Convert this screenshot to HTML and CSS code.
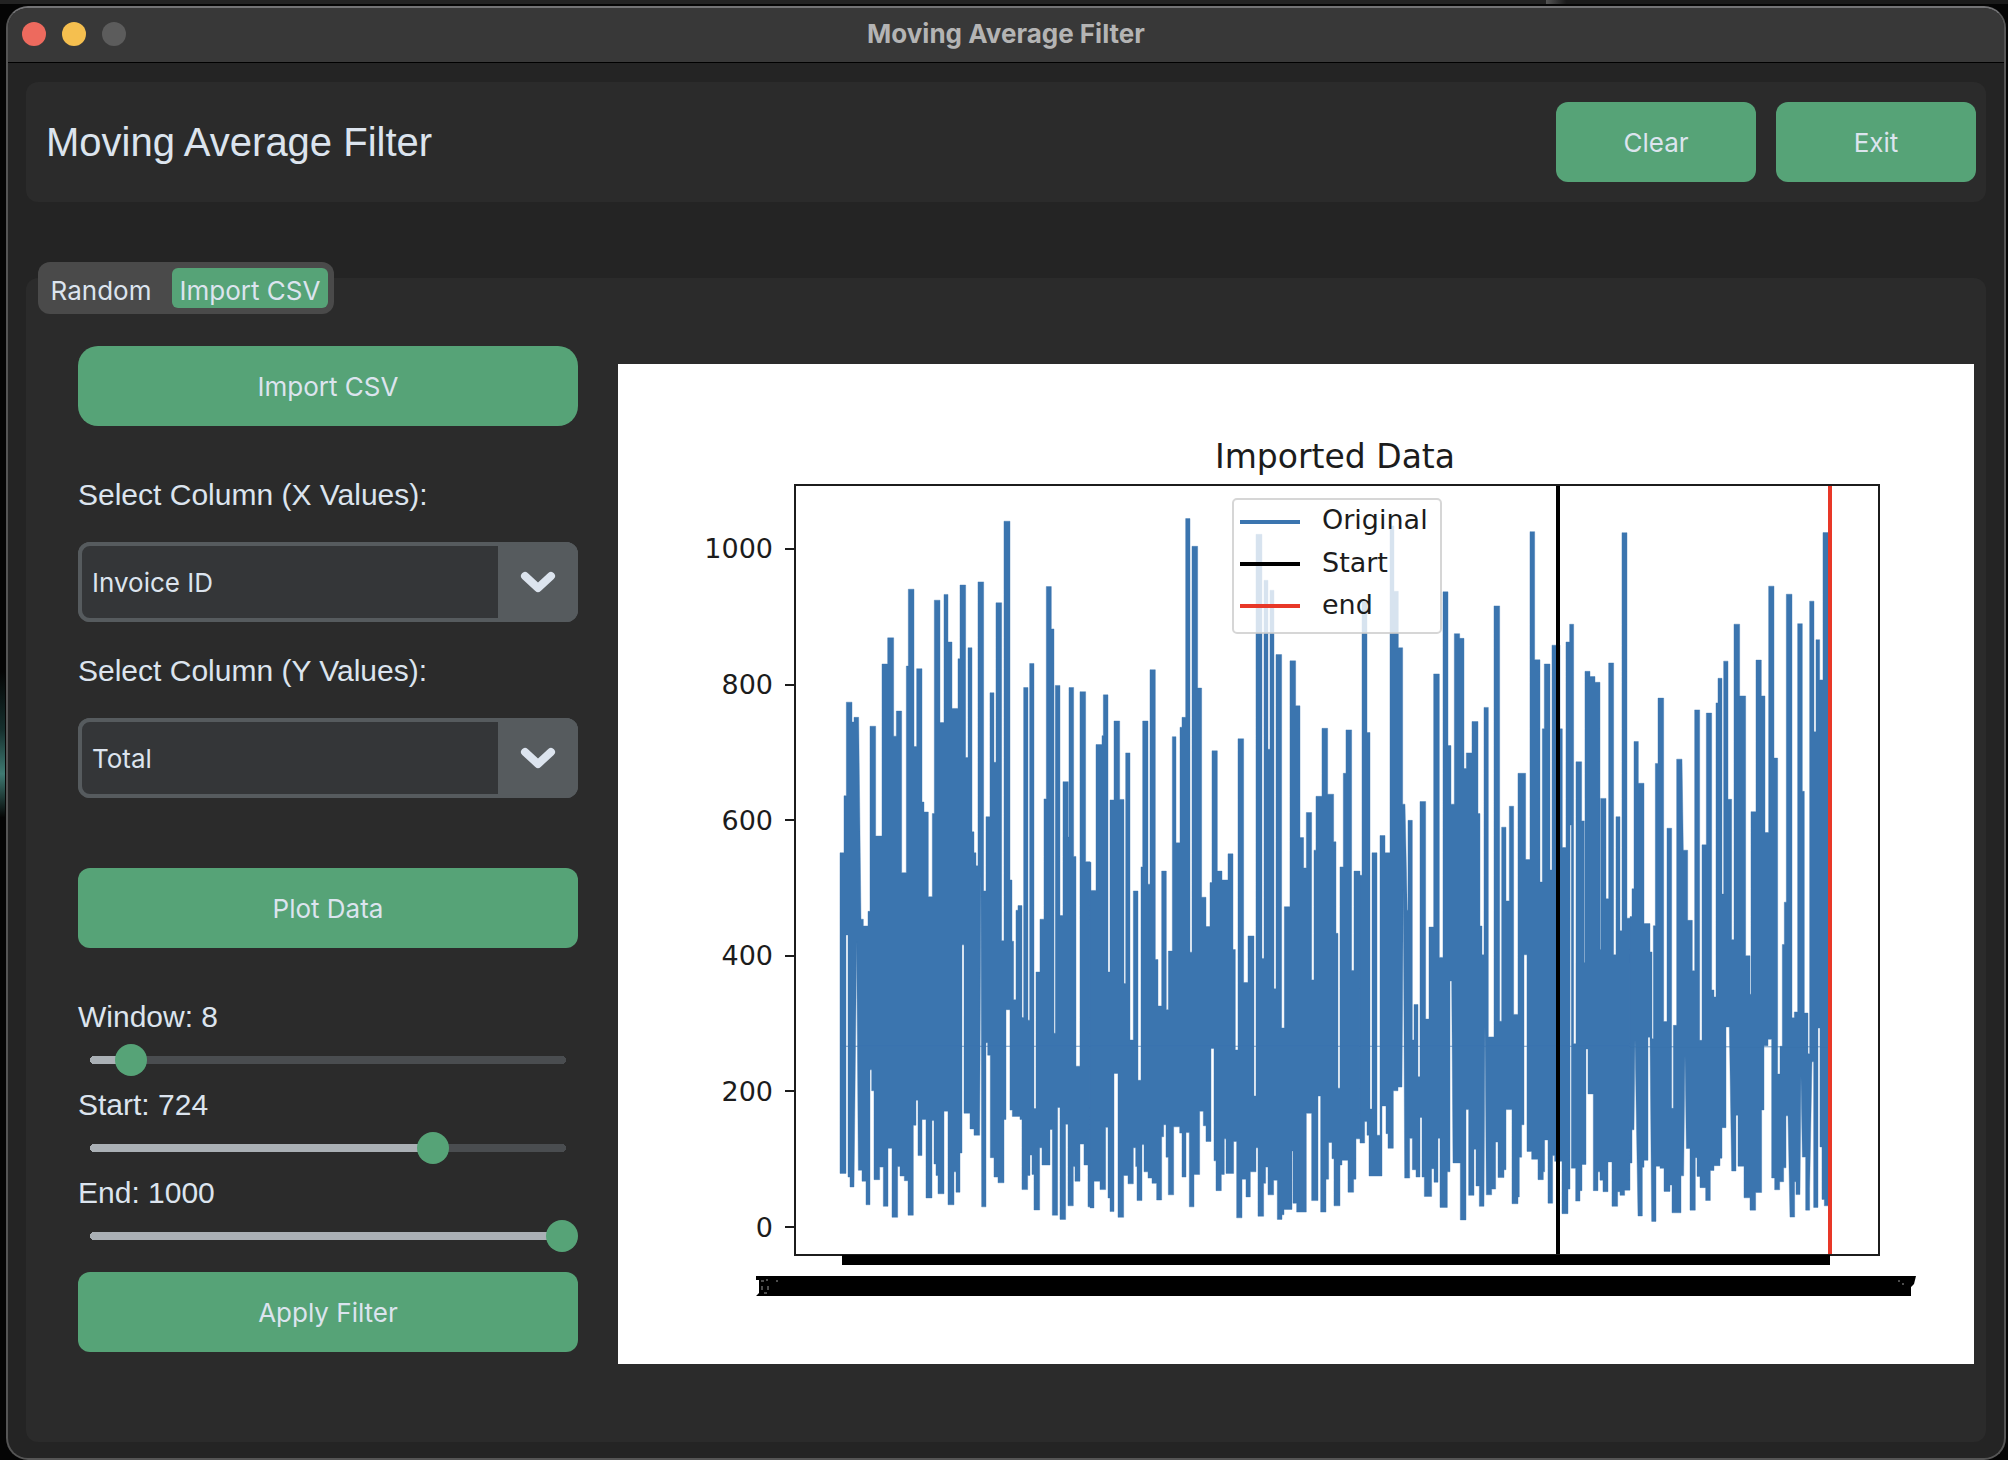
FILE: index.html
```
<!DOCTYPE html>
<html lang="en">
<head>
<meta charset="utf-8">
<meta name="viewport" content="width=device-width, initial-scale=1">
<title>Moving Average Filter</title>
<link rel="stylesheet" href="styles.css">
</head>
<body>
<div class="window">
  <header class="titlebar">
    <div class="lights">
      <button class="light light-close" type="button" aria-label="Close"></button>
      <button class="light light-minimize" type="button" aria-label="Minimize"></button>
      <button class="light light-zoom" type="button" aria-label="Zoom" disabled></button>
    </div>
    <span class="titlebar-text">Moving Average Filter</span>
  </header>

  <div class="content">
    <section class="panel toolbar">
      <h1 class="heading">Moving Average Filter</h1>
      <button class="button button-small" type="button">Clear</button>
      <button class="button button-small" type="button">Exit</button>
    </section>

    <main class="panel workspace">
      <nav class="tabs">
        <button class="tab tab-random" type="button">Random</button>
        <button class="tab tab-import tab-active" type="button">Import CSV</button>
      </nav>

      <div class="columns">
        <form class="controls">
          <button class="button button-import" type="button">Import CSV</button>

          <label class="label field-label" for="x-column">Select Column (X Values):</label>
          <div class="combo">
            <select class="combo-select" id="x-column"><option>Invoice ID</option></select>
            <span class="combo-arrow"><svg width="36" height="24" viewBox="0 0 36 24"><path d="M5 6L18 18L31 6"/></svg></span>
          </div>

          <label class="label field-label" for="y-column">Select Column (Y Values):</label>
          <div class="combo">
            <select class="combo-select" id="y-column"><option>Total</option></select>
            <span class="combo-arrow"><svg width="36" height="24" viewBox="0 0 36 24"><path d="M5 6L18 18L31 6"/></svg></span>
          </div>

          <button class="button button-plot" type="button">Plot Data</button>

          <div class="sliders">
            <div class="slider-row">
              <label class="label" for="window-size">Window: 8</label>
              <input class="slider" id="window-size" type="range" min="0" max="100" value="8" style="--fill:8%">
            </div>
            <div class="slider-row">
              <label class="label" for="start">Start: 724</label>
              <input class="slider" id="start" type="range" min="0" max="1000" value="724" style="--fill:72%">
            </div>
            <div class="slider-row">
              <label class="label" for="end">End: 1000</label>
              <input class="slider" id="end" type="range" min="0" max="1000" value="1000" style="--fill:100%">
            </div>
          </div>

          <button class="button" type="button">Apply Filter</button>
        </form>

        <svg class="chart" viewBox="0 0 1356 1000" role="img" aria-label="Imported Data">
          <rect width="1356" height="1000" fill="#fff"/>
          <!-- Invoice totals: each path holds the upper and the lower outline of a stretch of the series -->
          <g class="series">
            <path transform="translate(202 107) scale(.3333 .523)" d="M60 1100V730H72V621H79V442H96V480H102V471H116L123 857H130V870H144V842H150V488H167V698H186V369H203V319H221V507H229V459H245V768H259V373H265V226H282V527H290V378H306V633H312V652H325V814H337V655H343V247H360V481H372V236H384V327H396V454H414V359H420V218H437V548H444V338H456V690H462V730H468V755H474V212H491V803H498V661H510V424H522V557H528V252H545V898H552V96H570V782H576V899H581V1011H588V840H594V831H606V1045H611V414H624V1050H629V368H642V1219H648V958H660V857H672V627H679V221H694V302H702V1075H706V410H720V850H729V594H745V700H747V414H761V737H768V1138H780V422H797V747H810V1100Z
              M60 1100V1343H78V887H84V1350H90V1369H102L110 900L115 1337H126V1358H138V1403H150V1145H155V1185H162V1355H179V1331H190V1406H204V1295H216V1427H233V1330H240V1348H253V1357H264V1423H280V1251H288V1203H294V1309H306V1240H318V1390H336V1242H342V1325H348V1347H354V1382H372V1224H384V1403H402V1340H408V1379H420V1304H426V906H432V1228H450V1258H462V1270H479L483 770L485 1407H498V1093H503V1117H511V1313H522V1350H534V1361H552V1240H558V1030H570V1222H577V1234H600V1240H606V1374H623V1347H630V1308H636V1345H642V1413H659V1294H666V1327H690V1259H697V1423H713V1217H720V1431H737V1249H744V1405H760V1330H765V1358H780V1287H792V1327H804V1407H810V1100Z"/>
            <path transform="translate(472 107) scale(.3333 .523)" d="M0 1100V748H3V802H18V523H36V506H40V428H54V958H60V629H72V478H89V628H102V980H107V539H120V1088H130V803H144V1165H153V757H158V478H174V790H180V380H196V934H204V1023H215V765H229V1030H235V918H247V508H258V711H270V490H276V471H287V91H300V920H306V144H323V415H335V815H348V871H360V787H366V535H382V765H396V782H414V732H429V915H436V1107H444V512H461V978H474V889H492V1195H498V121H516V932H522V209H534V532H540V228H552V990H558V351H575V1065H583V833H600V363H617V449H630V701H641V759H649V653H665V973H672V725H678V622H696V492H713V618H731V709H738V884H744V1180H750V757H760V578H768V495H785V955H792V765H810V1100Z
              M0 1100V1409H12V1358H30V1374H47V1255H54V1390H60V1416H72V1152H84V1427H101V1347H114V1363H130V1294H137V1330H141V1395H156V1288H162V1340H174V1352H186V1362H200V1394H215V1273H221V1250H228V1312H235V1384H251V1254H269V1266H276V1350H288V1265H298V1407H312V1345H329V1224H340V1252H348V1282H363V1104H372V1319H378V1376H394V1345H403V1277H408V1343H431V1282H440V1428H456V1354H468V1388H481V1340H498V1294H504V1425H521V1362H527V1331H534V1384H551V1356H562V1431H576V1422H582V1412H606V1300H609V1400H620V1417H649V1228H665V1395H684V1195H692V1417H708V1354H716V1284H726V1315H732V1405H750V1327H756V1318H774V1379H791V1354H798V1277H810V1100Z"/>
            <path transform="translate(742 107) scale(.3333 .523)" d="M0 1100V773H6V250H21V500H30V1220H36V730H51V1270H60V697H75V730H90V105H102V230H115V338H128V637H135L142 840H144V668H157V1088H162V1020H174V1158H180V632H197V1048H207V872H221V388H238V930H249V231H264V525H273V637H283V311H299V320H312V569H319V539H336V479H354V655H360V870H366V925H372V452H385V1082H402V258H419V1052H425V681H438V822H448V641H461V1039H474V578H497V743H510V116H524V361H540V786H547V493H553V369H570V763H576V333H600V493H607V720H618V327H629V293H641V1095H648V556H665V669H673V940H675V383H690V393H705V404H720V915H722V626H738V818H746V367H761V925H768V661H780V879H786V118H801V855H810V1100Z
              M0 1100V1285H14V1244H21V1270H27V1348H66V1214H78V1267H84V1295H100V1185H114V1178H126L130 800L134 1352H149V1276H157V1336H168V1350H180V1236H186V1350H193V1387H215V1334H222V1360H234V1276H240V1408H262V1340H270V975H275L279 1323H301V1432H318V1221H326V1385H342V1297H348V1367H358V1406H372L375 1060L379 1384H395V1373H407V1283H414V1351H432V1336H438V1221H456V1401H474V1388H478V1312H485V1250H492V925H501V1301H515V1316H534V1355H550V1340H554V1279H564V1400H578V1309H584V1320H606V1420H624V1373H630V677H634V1333H647V1396H660V1376H666V1326H678V1105H684V1191H700V1376H714V1340H720V1356H729V1378H744V1321H756V1406H773V1378H780V1385H794V1375H810V1100Z"/>
            <path transform="translate(1012 107) scale(.3333 .5356)" d="M0 1075V832H6V780H12V505H25V583H42V845H60V898H66V1060H70V849H76V546H84V424H101V1028H111V667H125V1190H130V1035H140V538H156L160 708H173V839H187V933H194V446H209V1063H216V698H229V452H245V969H252V982H258V433H264V387H276V790H281V355H294V613H305V875H312V286H329V420H347V905H360V977H363V636H378V353H394V420H405V675H416V215H432V536H443V1126H450V1074H457V884H463V805H469V230H486V1021H493V1010H503V285H517V598H523V1012H534V1088H539V243H552V487H558V315H569V390H579V115H597V1075Z
              M0 1075V1292H6V1230H12L15 1060L24 1391H37V1300H42V1287H54V1057H60L65 1401H78V1298H90V1302H102V1345H120V1333H126V1385H153V1316H161L165 1090L169 1265H180V1380H196V1282H201V1317H210V1338H227V1362H241V1306H252V1297H270V1283H276V1226H288V1038H298L305 1307H318V1203H324V1298H342V1357H360V1380H377V1347H395V1193H402V1073H414V1061H425V1320H434V1342H449V1327H461V1301H468V1204H474L480 1393H494V1327H498V1351H510L513 1130L517 1281H527V1380H539V1340L546 1103H551V1375H564V1040H570V1262H576V1360H583V1372H597V1075Z"/>
          </g>
          <!-- Start and end markers -->
          <path d="M940 121V891" stroke="#000" stroke-width="4"/>
          <path d="M1212 121V891" stroke="#e83828" stroke-width="4"/>
          <!-- Axes, y ticks and the crowded x ticks with their labels -->
          <rect x="177" y="121" width="1084" height="770" fill="none" stroke="#1c1c1c" stroke-width="2"/>
          <path d="M167 185H177M167 321H177M167 456H177M167 592H177M167 727H177M167 863H177" stroke="#1c1c1c" stroke-width="2"/>
          <path d="M224 891H1212V901H224Z" fill="#000"/>
          <path d="M138 912H1298L1296 920L1293 923V932H138L141 929V916H138Z" fill="#000"/>
          <path d="M143 917h3M148 916h2M158 917h2M144 926v-4M150 922v4M146 929h3M1280 917h2M1284 920h2" stroke="#999" stroke-width="1"/>
          <g class="tick-text">
            <text x="155" y="194">1000</text>
            <text x="155" y="330">800</text>
            <text x="155" y="466">600</text>
            <text x="155" y="601">400</text>
            <text x="155" y="737">200</text>
            <text x="155" y="873">0</text>
          </g>
          <text class="chart-title" x="717" y="104">Imported Data</text>
          <!-- Legend -->
          <rect x="615" y="135" width="208" height="134" rx="4" fill="#fff" fill-opacity=".8" stroke="#ccc" stroke-opacity=".8" stroke-width="2"/>
          <path d="M622 158H682" stroke="#3b75af" stroke-width="4"/>
          <path d="M622 200H682" stroke="#000" stroke-width="4"/>
          <path d="M622 242H682" stroke="#e83828" stroke-width="4"/>
          <g class="legend-text">
            <text x="704" y="165">Original</text>
            <text x="704" y="208">Start</text>
            <text x="704" y="250">end</text>
          </g>
        </svg>
      </div>
    </main>
  </div>
</div>
</body>
</html>
```
FILE: styles.css
```
* { box-sizing: border-box; }

:root {
  --green: #56a377;
  --text: #dce4ee;
  --panel: #2b2b2b;
}

body {
  margin: 0;
  padding: 6px 2px 0 6px;
  background:
    linear-gradient(to right, #232323 77%, #555 77%, #1a1a1a 78%) top / 100% 4px no-repeat,
    linear-gradient(transparent 46%, #16302e 50%, #3f7a72 53%, transparent 56%) left / 5px 100% no-repeat,
    #050505;
  color: var(--text);
  font-family: Inter, Roboto, sans-serif;
  font-size: 26px;
}

button, select, input { font: inherit; color: inherit; margin: 0; }

.window {
  min-height: calc(100vh - 6px);
  background: #242424;
  border: 2px solid #555;
  border-top-color: #737375;
  border-radius: 22px;
  overflow: hidden;
}

.titlebar {
  position: relative;
  display: flex;
  align-items: center;
  justify-content: center;
  height: 55px;
  padding-bottom: 2px;
  background: #383838;
  border-bottom: 1px solid #000;
}

.titlebar-text {
  color: #b4b4b4;
  font-weight: 700;
  line-height: 32px;
}

.lights {
  position: absolute;
  left: 14px;
  display: flex;
  gap: 16px;
}

.light {
  width: 24px;
  height: 24px;
  padding: 0;
  border: 0;
  border-radius: 50%;
}

.light-close { background: #ed6a5e; }
.light-minimize { background: #f5bf4f; }
.light-zoom { background: #5c5c5c; }

.content {
  display: flex;
  flex-direction: column;
  gap: 76px;
  padding: 19px 18px 16px 18px;
}

.panel {
  background: var(--panel);
  border-radius: 12px;
}

.toolbar {
  display: flex;
  align-items: center;
  gap: 20px;
  padding: 20px 10px 20px 20px;
}

.heading {
  flex: 1;
  margin: 0;
  font-size: 40px;
  font-weight: 400;
  font-family: "Liberation Sans", Arial, sans-serif;
  line-height: 48px;
}

.button {
  height: 80px;
  padding: 0;
  border: 0;
  border-radius: 12px;
  background: var(--green);
}

.button-small { width: 200px; }
.button-import { border-radius: 20px; }
.button-plot { margin-top: 70px; }

.workspace { padding: 0 12px 78px; }

.tabs {
  display: flex;
  gap: 14px;
  width: fit-content;
  margin-top: -16px;
  padding: 6px;
  border-radius: 12px;
  background: #4a4a4a;
}

.tab {
  height: 40px;
  padding: 4px 0 0;
  border: 0;
  border-radius: 6px;
  background: none;
}

.tab-random { width: 114px; }
.tab-import { width: 156px; }
.tab-active { background: var(--green); }

.columns {
  display: grid;
  grid-template-columns: 500px 1fr;
  align-items: start;
  gap: 40px;
  margin-top: 32px;
  padding-left: 40px;
}

.controls {
  display: flex;
  flex-direction: column;
}

.label {
  font-family: "Liberation Sans", Arial, sans-serif;
  font-size: 30px;
  line-height: 50px;
}

.field-label { padding: 24px 0 22px; }
.button-import { margin-bottom: 20px; }

.combo {
  display: grid;
  grid-template-columns: 1fr 80px;
  height: 80px;
  border-radius: 12px;
  background: #565b5e;
}

.combo-select {
  grid-area: 1 / 1 / 2 / 3;
  width: 100%;
  padding: 0 80px 0 10px;
  appearance: none;
  border: 4px solid #565b5e;
  border-radius: 12px;
  background: #343638;
}

.combo-arrow {
  grid-area: 1 / 2;
  z-index: 1;
  display: flex;
  align-items: center;
  justify-content: center;
  border-radius: 0 12px 12px 0;
  background: #565b5e;
  pointer-events: none;
}

.combo-arrow path {
  fill: none;
  stroke: var(--text);
  stroke-width: 8;
  stroke-linecap: round;
  stroke-linejoin: round;
}

.sliders { margin: 44px 0 16px; }

.slider-row {
  display: flex;
  flex-direction: column;
  gap: 2px;
  padding-bottom: 4px;
}

.slider {
  width: 100%;
  height: 32px;
  appearance: none;
  background: none;
}

/* The bar is inset from the ends, so its rounded caps are separate layers */
.slider::-webkit-slider-runnable-track {
  height: 32px;
  background:
    linear-gradient(to right, #aab0b5 var(--fill), #4a4d50 var(--fill)) center / calc(100% - 32px) 8px no-repeat,
    radial-gradient(circle, #aab0b5 4px, transparent 4px) left 12px center / 8px 8px no-repeat,
    radial-gradient(circle, #4a4d50 4px, transparent 4px) right 12px center / 8px 8px no-repeat;
}

.slider::-webkit-slider-thumb {
  width: 32px;
  height: 32px;
  appearance: none;
  border-radius: 50%;
  background: var(--green);
}

.chart {
  display: block;
  width: 100%;
  height: auto;
  margin-top: 18px;
  font-family: "DejaVu Sans", sans-serif;
  fill: #1c1c1c;
}

.series path {
  fill: #3b75af;
  fill-rule: evenodd;
  stroke: #3b75af;
  stroke-opacity: .4;
  stroke-width: 1;
  vector-effect: non-scaling-stroke;
}

.tick-text { font-size: 27px; text-anchor: end; }
.chart-title { font-size: 33px; text-anchor: middle; }
.legend-text { font-size: 27px; }
```
